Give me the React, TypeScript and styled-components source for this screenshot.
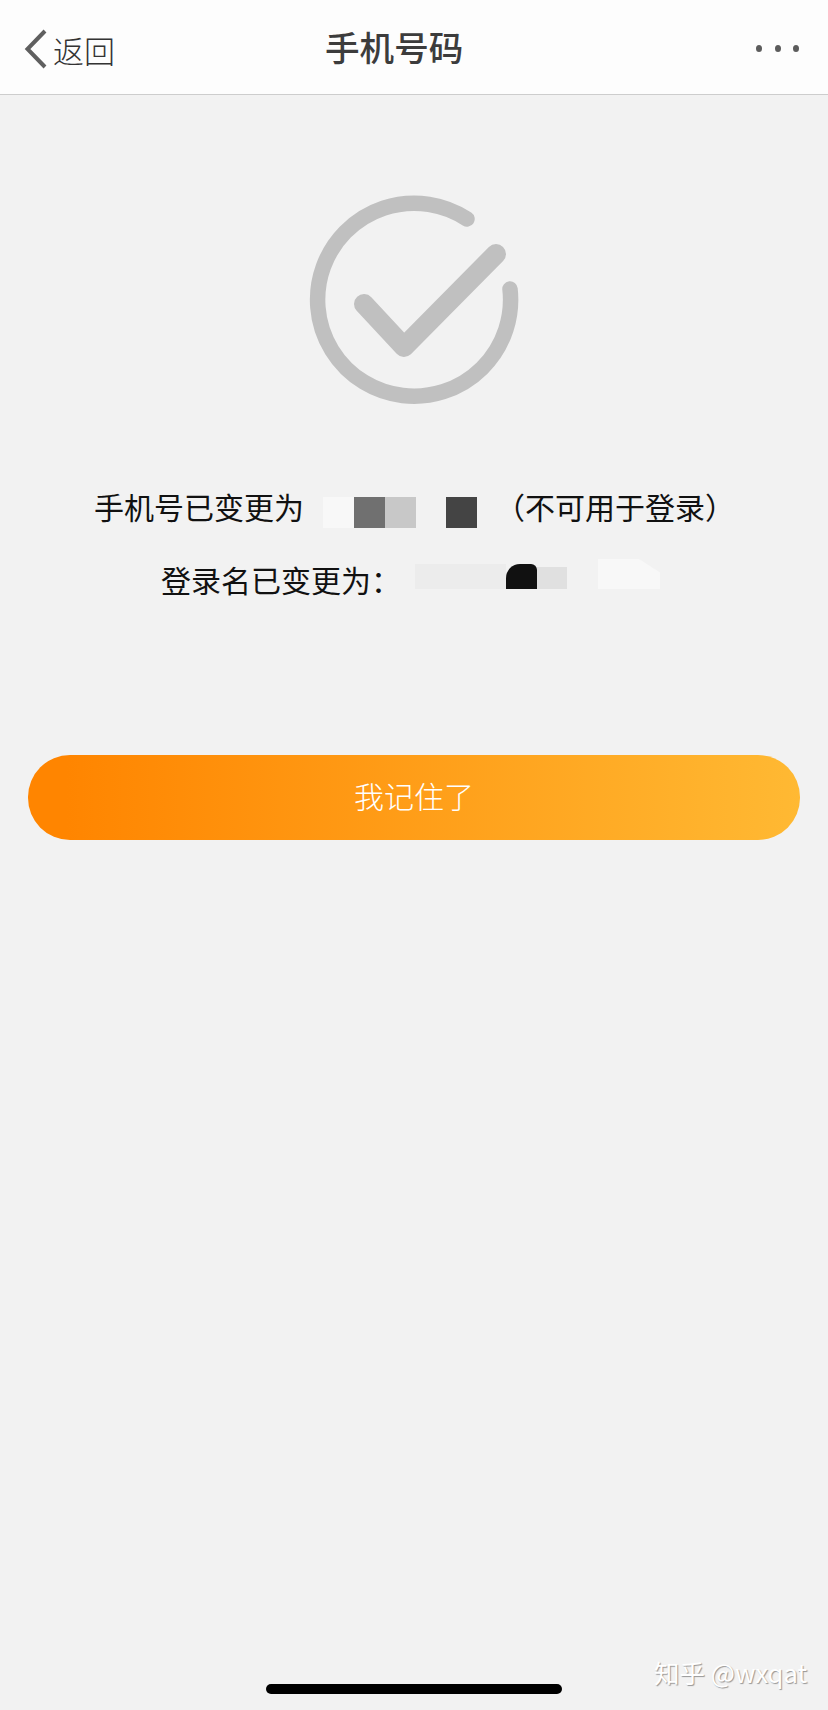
import React from "react";
import styled, { createGlobalStyle } from "styled-components";

const GlobalStyle = createGlobalStyle`
  html, body {
    margin: 0;
    padding: 0;
    background: #f2f2f2;
  }
  body {
    font-family: "Noto Sans CJK SC", "Liberation Sans", sans-serif;
  }
`;

const Page = styled.div`
  position: relative;
  width: 828px;
  height: 1710px;
  display: flex;
  flex-direction: column;
  overflow: hidden;
  background: #f2f2f2;
`;

const NavBar = styled.header`
  height: 95px;
  box-sizing: border-box;
  padding-left: 24px;
  padding-right: 29px;
  display: flex;
  align-items: center;
  background: #fdfdfd;
  border-bottom: 1px solid #cdcdcd;
`;

const BackButton = styled.div`
  width: 301px;
  padding-top: 4px;
  display: flex;
  align-items: center;
  gap: 5px;
  color: #333;
  font-size: 31px;
  font-weight: 300;
`;

const Title = styled.h1`
  margin: 0;
  width: 139px;
  padding-bottom: 2px;
  font-size: 34.6px;
  line-height: 44px;
  font-weight: 500;
  color: #3c3c3c;
  white-space: nowrap;
`;

const MoreDots = styled.div`
  margin-left: auto;
  padding-top: 2px;
  display: flex;
  gap: 12.5px;
`;

const Dot = styled.span`
  width: 6px;
  height: 7px;
  border-radius: 50%;
  background: #5c5c5c;
`;

const Content = styled.main`
  display: flex;
  flex-direction: column;
  align-items: center;
`;

const CheckIcon = styled.svg`
  display: block;
  width: 208px;
  height: 208px;
  margin-top: 101px;
  overflow: visible;
`;

const Rows = styled.div`
  margin-top: 78px;
  align-self: flex-start;
  padding-left: 94px;
  display: flex;
  flex-direction: column;
`;

const InfoRow = styled.div<{ $indent: number; $top?: number }>`
  display: flex;
  align-items: center;
  height: 48px;
  margin-top: ${(p) => p.$top ?? 0}px;
  padding-left: ${(p) => p.$indent}px;
  font-size: 30px;
  font-weight: 400;
  color: #111;
  white-space: nowrap;
`;

const Mosaic = styled.div<{ $left: number; $right: number; $shift: number }>`
  display: flex;
  align-items: flex-end;
  margin-left: ${(p) => p.$left}px;
  margin-right: ${(p) => p.$right}px;
  transform: translateY(${(p) => p.$shift}px);
`;

const MosaicCell = styled.span<{ $w: number; $h: number; $tone: string; $gap?: number; $round?: boolean; $chipped?: boolean }>`
  display: block;
  width: ${(p) => p.$w}px;
  height: ${(p) => p.$h}px;
  margin-left: ${(p) => p.$gap ?? 0}px;
  background: ${(p) => p.$tone};
  border-top-left-radius: ${(p) => (p.$round ? "14px" : "0")};
  border-top-right-radius: ${(p) => (p.$round ? "6px" : "0")};
  clip-path: ${(p) => (p.$chipped ? "polygon(0 0, 66% 0, 100% 45%, 100% 100%, 0 100%)" : "none")};
`;

const PrimaryButton = styled.button`
  margin: 152px 0 0 28px;
  width: 772px;
  height: 85px;
  align-self: flex-start;
  border: 0;
  border-radius: 42px;
  padding: 0 0 5px;
  background: linear-gradient(90deg, #ff8500 5%, #ffb933 100%);
  color: #fff;
  font-family: inherit;
  font-size: 30px;
  font-weight: 300;
`;

const HomeIndicator = styled.div`
  position: absolute;
  left: 266px;
  top: 1684px;
  width: 296px;
  height: 10px;
  border-radius: 5px;
  background: #000;
`;

const Watermark = styled.div`
  position: absolute;
  right: 21px;
  top: 1654px;
  font-size: 25.5px;
  line-height: 36px;
  color: #fff;
  text-shadow: 1px 1px 1px #969696;
  white-space: nowrap;
`;

export default function App() {
  return (
    <Page>
      <GlobalStyle />
      <NavBar>
        <BackButton>
          <svg width="24" height="40" viewBox="0 0 24 40" fill="none">
            <path d="M21 2 L3.500 20 L21 38" stroke="#5f5f5f" strokeWidth="4" />
          </svg>
          返回
        </BackButton>
        <Title>手机号码</Title>
        <MoreDots>
          <Dot />
          <Dot />
          <Dot />
        </MoreDots>
      </NavBar>
      <Content>
        <CheckIcon viewBox="0 0 208 208" fill="none" stroke="#c0c0c0" strokeLinecap="round" strokeLinejoin="round">
          <path d="M157 23 A96.500 96.500 0 1 0 200 93" strokeWidth="15.500" />
          <path d="M54 108 L94 151 L186 58" strokeWidth="20" />
        </CheckIcon>
        <Rows>
          <InfoRow $indent={0}>
            手机号已变更为
            <Mosaic $left={19} $right={18} $shift={6}>
              <MosaicCell $w={31} $h={31} $tone="#f8f8f8" />
              <MosaicCell $w={31} $h={31} $tone="#707070" />
              <MosaicCell $w={31} $h={31} $tone="#c8c8c8" />
              <MosaicCell $w={31} $h={31} $tone="#444444" $gap={30} />
            </Mosaic>
            （不可用于登录）
          </InfoRow>
          <InfoRow $indent={67} $top={25}>
            登录名已变更为：
            <Mosaic $left={14} $right={0} $shift={-5}>
              <MosaicCell $w={91} $h={25} $tone="#ececec" />
              <MosaicCell $w={31} $h={25} $tone="#111111" $round />
              <MosaicCell $w={30} $h={22} $tone="#e0e0e0" />
              <MosaicCell $w={62} $h={30} $tone="#f8f8f8" $gap={31} $chipped />
            </Mosaic>
          </InfoRow>
        </Rows>
        <PrimaryButton>我记住了</PrimaryButton>
      </Content>
      <Watermark>知乎 @wxqat</Watermark>
      <HomeIndicator />
    </Page>
  );
}
